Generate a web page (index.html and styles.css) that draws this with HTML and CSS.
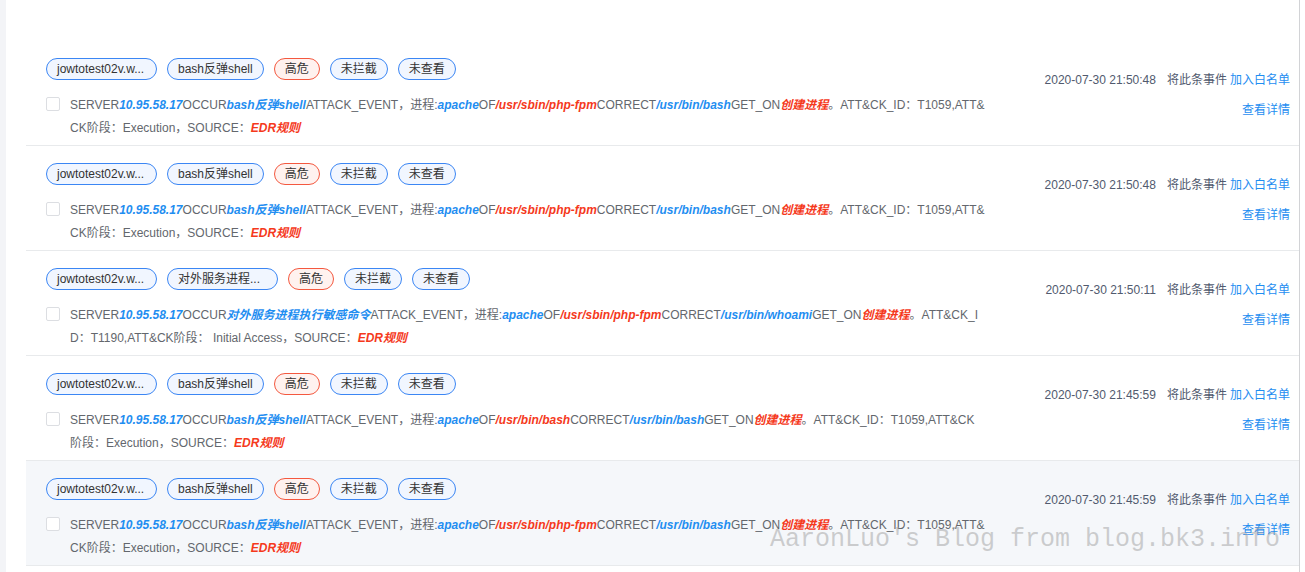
FILE: index.html
```html
<!DOCTYPE html>
<html lang="zh">
<head>
<meta charset="utf-8">
<title>事件列表</title>
<link rel="stylesheet" href="styles.css">
</head>
<body>
<div class="page">
  <div class="side"></div>
  <main class="panel">
    <ul class="list">
      <li class="row">
        <div class="left">
          <div class="tags">
            <span class="tag tag-fixed">jowtotest02v.w...</span>
            <span class="tag">bash反弹shell</span>
            <span class="tag tag-red">高危</span>
            <span class="tag">未拦截</span>
            <span class="tag">未查看</span>
          </div>
          <div class="body">
            <span class="check"></span>
            <p class="msg">SERVER<b class="bl">10.95.58.17</b>OCCUR<b class="bl">bash反弹shell</b>ATTACK_EVENT，进程:<b class="bl">apache</b>OF<b class="rd">/usr/sbin/php-fpm</b>CORRECT<b class="bl">/usr/bin/bash</b>GET_ON<b class="rd">创建进程</b>。ATT&amp;CK_ID：T1059,ATT&amp;CK阶段：Execution，SOURCE：<b class="rd">EDR规则</b></p>
          </div>
        </div>
        <div class="right">
          <div class="meta"><span class="time">2020-07-30 21:50:48</span><span class="label">将此条事件</span><a class="link">加入白名单</a></div>
          <div class="meta"><a class="link">查看详情</a></div>
        </div>
      </li>
      <li class="row">
        <div class="left">
          <div class="tags">
            <span class="tag tag-fixed">jowtotest02v.w...</span>
            <span class="tag">bash反弹shell</span>
            <span class="tag tag-red">高危</span>
            <span class="tag">未拦截</span>
            <span class="tag">未查看</span>
          </div>
          <div class="body">
            <span class="check"></span>
            <p class="msg">SERVER<b class="bl">10.95.58.17</b>OCCUR<b class="bl">bash反弹shell</b>ATTACK_EVENT，进程:<b class="bl">apache</b>OF<b class="rd">/usr/sbin/php-fpm</b>CORRECT<b class="bl">/usr/bin/bash</b>GET_ON<b class="rd">创建进程</b>。ATT&amp;CK_ID：T1059,ATT&amp;CK阶段：Execution，SOURCE：<b class="rd">EDR规则</b></p>
          </div>
        </div>
        <div class="right">
          <div class="meta"><span class="time">2020-07-30 21:50:48</span><span class="label">将此条事件</span><a class="link">加入白名单</a></div>
          <div class="meta"><a class="link">查看详情</a></div>
        </div>
      </li>
      <li class="row">
        <div class="left">
          <div class="tags">
            <span class="tag tag-fixed">jowtotest02v.w...</span>
            <span class="tag tag-fixed">对外服务进程...</span>
            <span class="tag tag-red">高危</span>
            <span class="tag">未拦截</span>
            <span class="tag">未查看</span>
          </div>
          <div class="body">
            <span class="check"></span>
            <p class="msg">SERVER<b class="bl">10.95.58.17</b>OCCUR<b class="bl">对外服务进程执行敏感命令</b>ATTACK_EVENT，进程:<b class="bl">apache</b>OF<b class="rd">/usr/sbin/php-fpm</b>CORRECT<b class="bl">/usr/bin/whoami</b>GET_ON<b class="rd">创建进程</b>。ATT&amp;CK_ID：T1190,ATT&amp;CK阶段： Initial Access，SOURCE：<b class="rd">EDR规则</b></p>
          </div>
        </div>
        <div class="right">
          <div class="meta"><span class="time">2020-07-30 21:50:11</span><span class="label">将此条事件</span><a class="link">加入白名单</a></div>
          <div class="meta"><a class="link">查看详情</a></div>
        </div>
      </li>
      <li class="row">
        <div class="left">
          <div class="tags">
            <span class="tag tag-fixed">jowtotest02v.w...</span>
            <span class="tag">bash反弹shell</span>
            <span class="tag tag-red">高危</span>
            <span class="tag">未拦截</span>
            <span class="tag">未查看</span>
          </div>
          <div class="body">
            <span class="check"></span>
            <p class="msg">SERVER<b class="bl">10.95.58.17</b>OCCUR<b class="bl">bash反弹shell</b>ATTACK_EVENT，进程:<b class="bl">apache</b>OF<b class="rd">/usr/bin/bash</b>CORRECT<b class="bl">/usr/bin/bash</b>GET_ON<b class="rd">创建进程</b>。ATT&amp;CK_ID：T1059,ATT&amp;CK阶段：Execution，SOURCE：<b class="rd">EDR规则</b></p>
          </div>
        </div>
        <div class="right">
          <div class="meta"><span class="time">2020-07-30 21:45:59</span><span class="label">将此条事件</span><a class="link">加入白名单</a></div>
          <div class="meta"><a class="link">查看详情</a></div>
        </div>
      </li>
      <li class="row row-hover">
        <div class="left">
          <div class="tags">
            <span class="tag tag-fixed">jowtotest02v.w...</span>
            <span class="tag">bash反弹shell</span>
            <span class="tag tag-red">高危</span>
            <span class="tag">未拦截</span>
            <span class="tag">未查看</span>
          </div>
          <div class="body">
            <span class="check"></span>
            <p class="msg">SERVER<b class="bl">10.95.58.17</b>OCCUR<b class="bl">bash反弹shell</b>ATTACK_EVENT，进程:<b class="bl">apache</b>OF<b class="rd">/usr/sbin/php-fpm</b>CORRECT<b class="bl">/usr/bin/bash</b>GET_ON<b class="rd">创建进程</b>。ATT&amp;CK_ID：T1059,ATT&amp;CK阶段：Execution，SOURCE：<b class="rd">EDR规则</b></p>
          </div>
        </div>
        <div class="right">
          <div class="meta"><span class="time">2020-07-30 21:45:59</span><span class="label">将此条事件</span><a class="link">加入白名单</a></div>
          <div class="meta"><a class="link">查看详情</a></div>
        </div>
      </li>
    </ul>
  </main>
</div>
<div class="watermark">AaronLuo's Blog from blog.bk3.info</div>
</body>
</html>
```

FILE: styles.css
```css
html, body {
  margin: 0;
  padding: 0;
  background: #ffffff;
  height: 100%;
  overflow: hidden;
}
body {
  font-family: "Liberation Sans", Arial, "Noto Sans CJK SC", sans-serif;
  font-size: 12px;
  color: #515a6e;
}
.page {
  display: flex;
  height: 572px;
}
.side {
  width: 6px;
  flex: none;
  background: #f3f4f7;
}
.panel {
  width: 1294px;
  flex: none;
  border-right: 1px solid #d2d3d6;
  background: #ffffff;
  padding-left: 20px;
  padding-top: 41px;
  box-sizing: border-box;
}
.list {
  list-style: none;
  margin: 0;
  padding: 0;
}
.row {
  display: flex;
  height: 105px;
  box-sizing: border-box;
  padding: 17px 9px 0 20px;
  border-bottom: 1px solid #e8eaec;
}
.row-hover {
  background: #f5f7fa;
}
.left {
  width: 940px;
  flex: none;
}
.tags {
  display: flex;
  gap: 10px;
  height: 22px;
}
.tag {
  display: inline-block;
  height: 22px;
  line-height: 20px;
  box-sizing: border-box;
  padding: 0 10px;
  border: 1px solid #3b86f4;
  border-radius: 11px;
  background: #f1f6ff;
  color: #333333;
  white-space: nowrap;
}
.tag-fixed {
  width: 111px;
  overflow: hidden;
}
.tag-red {
  border-color: #f4583f;
  background: #fff2ef;
}
.body {
  display: flex;
  margin-top: 14px;
}
.check {
  width: 14px;
  height: 14px;
  flex: none;
  box-sizing: border-box;
  border: 1px solid #dcdee2;
  border-radius: 2px;
  background: #ffffff;
  margin: 3px 10px 0 0;
}
.msg {
  margin: 0;
  width: 918px;
  line-height: 23px;
  color: #63676d;
  word-break: break-all;
}
.bl, .rd {
  font-style: italic;
  font-weight: bold;
}
.bl {
  color: #1f8ef1;
}
.rd {
  color: #f5391c;
}
.right {
  flex: 1;
  padding-top: 12px;
  text-align: right;
}
.meta {
  height: 20px;
  line-height: 20px;
  margin-bottom: 10px;
  white-space: nowrap;
}
.meta + .meta {
  margin-top: 2px;
}
.time {
  color: #515a6e;
  margin-right: 11px;
}
.label {
  color: #515a6e;
  margin-right: 3px;
}
.link {
  color: #1f8ef1;
  cursor: pointer;
}
.watermark {
  position: absolute;
  left: 770px;
  top: 525px;
  font-family: "Liberation Mono", "Courier New", monospace;
  font-size: 25px;
  line-height: 30px;
  color: rgba(160, 160, 160, 0.5);
  white-space: nowrap;
  pointer-events: none;
}
```
